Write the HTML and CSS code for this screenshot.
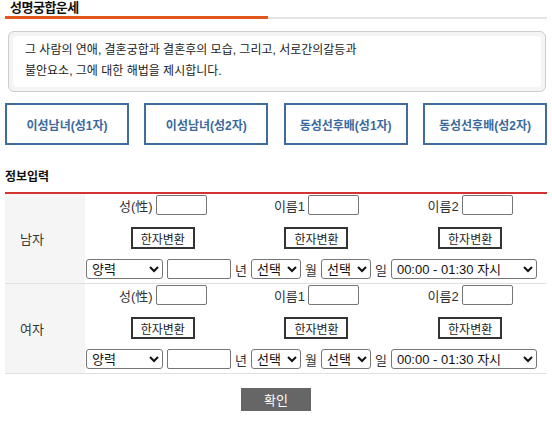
FILE: index.html
```html
<!DOCTYPE html>
<html lang="ko">
<head>
<meta charset="utf-8">
<title>성명궁합운세</title>
<link rel="stylesheet" href="styles.css">
</head>
<body>
<div class="page">
  <div class="title-bar"><h1 class="title">성명궁합운세</h1></div>

  <div class="intro">
    <div class="intro-inner">
      <p>그 사람의 연애, 결혼궁합과 결혼후의 모습, 그리고, 서로간의갈등과<br>불안요소, 그에 대한 해법을 제시합니다.</p>
    </div>
  </div>

  <div class="types">
    <button class="type-btn">이성남녀(성1자)</button>
    <button class="type-btn">이성남녀(성2자)</button>
    <button class="type-btn">동성선후배(성1자)</button>
    <button class="type-btn">동성선후배(성2자)</button>
  </div>

  <h2 class="section">정보입력</h2>

  <div class="form">
    <div class="person">
      <div class="person-label">남자</div>
      <div class="person-fields">
        <div class="grid-row">
          <div class="cell"><span class="lbl">성(性)</span><input class="txt" type="text"></div>
          <div class="cell"><span class="lbl">이름1</span><input class="txt" type="text"></div>
          <div class="cell"><span class="lbl">이름2</span><input class="txt" type="text"></div>
        </div>
        <div class="grid-row btn-row">
          <div class="cell"><button class="hanja">한자변환</button></div>
          <div class="cell"><button class="hanja">한자변환</button></div>
          <div class="cell"><button class="hanja">한자변환</button></div>
        </div>
        <div class="birth-row">
          <select class="sel sel-cal"><option>양력</option><option>음력</option></select>
          <input class="txt year" type="text">
          <span class="unit">년</span>
          <select class="sel sel-sm"><option>선택</option></select>
          <span class="unit">월</span>
          <select class="sel sel-sm"><option>선택</option></select>
          <span class="unit">일</span>
          <select class="sel sel-time"><option>00:00 - 01:30 자시</option></select>
        </div>
      </div>
    </div>

    <div class="person">
      <div class="person-label">여자</div>
      <div class="person-fields">
        <div class="grid-row">
          <div class="cell"><span class="lbl">성(性)</span><input class="txt" type="text"></div>
          <div class="cell"><span class="lbl">이름1</span><input class="txt" type="text"></div>
          <div class="cell"><span class="lbl">이름2</span><input class="txt" type="text"></div>
        </div>
        <div class="grid-row btn-row">
          <div class="cell"><button class="hanja">한자변환</button></div>
          <div class="cell"><button class="hanja">한자변환</button></div>
          <div class="cell"><button class="hanja">한자변환</button></div>
        </div>
        <div class="birth-row">
          <select class="sel sel-cal"><option>양력</option><option>음력</option></select>
          <input class="txt year" type="text">
          <span class="unit">년</span>
          <select class="sel sel-sm"><option>선택</option></select>
          <span class="unit">월</span>
          <select class="sel sel-sm"><option>선택</option></select>
          <span class="unit">일</span>
          <select class="sel sel-time"><option>00:00 - 01:30 자시</option></select>
        </div>
      </div>
    </div>
  </div>

  <div class="submit-wrap"><button class="submit">확인</button></div>
</div>
</body>
</html>
```

FILE: styles.css
```css
* { box-sizing: border-box; }

body {
  margin: 0;
  background: #fff;
  color: #222;
  font-family: "Liberation Sans", "Noto Sans CJK KR", sans-serif;
  font-size: 12px;
}

.page {
  width: 542px;
  margin: 0 5px;
}

.title-bar {
  border-bottom: 2px solid #e4e4e4;
}

.title {
  margin: 0 0 -2px;
  width: 263px;
  padding-left: 5px;
  font-size: 13px;
  line-height: 16px;
  font-weight: bold;
  letter-spacing: -0.5px;
  color: #111;
  border-bottom: 3px solid #e2561c;
}

.intro {
  margin: 12px 1px 0 3px;
  border: 1px solid #cdcdcd;
  border-radius: 6px;
  background: #f4f4f4;
  padding: 4px;
}

.intro-inner {
  background: #fff;
  border-radius: 4px;
  padding: 4px 12px 5px 12px;
}

.intro-inner p {
  margin: 0;
  font-size: 12px;
  line-height: 21px;
  color: #222;
}

.types {
  margin-top: 11px;
  display: flex;
  justify-content: space-between;
}

.type-btn {
  width: 124px;
  height: 42px;
  border: 2px solid #3f6c9c;
  background: #fff;
  color: #3a6a9c;
  font-family: inherit;
  font-size: 12px;
  font-weight: bold;
  padding: 0;
}

.section {
  margin: 24px 0 7px;
  font-size: 12px;
  line-height: 16px;
  font-weight: bold;
  color: #111;
}

.form {
  border-top: 2px solid #d43333;
}

.person {
  display: flex;
  border-bottom: 1px solid #e0e0e0;
}

.person-label {
  width: 80px;
  background: #f5f5f5;
  display: flex;
  align-items: center;
  padding-left: 15px;
  font-size: 13px;
  color: #333;
}

.person-fields {
  flex: 1;
  padding: 1px 0 4px 1px;
  display: flex;
  flex-direction: column;
}

.grid-row {
  display: grid;
  grid-template-columns: 1fr 1fr 1fr;
  height: 20px;
}

.btn-row {
  height: 22px;
  margin-top: 12px;
}

.cell {
  display: flex;
  align-items: center;
  justify-content: center;
  gap: 3px;
}

.lbl {
  font-size: 13px;
  color: #333;
}

.txt {
  width: 51px;
  height: 20px;
  border: 1px solid #767676;
  border-radius: 2px;
  background: #fff;
  padding: 0 2px;
  font-family: inherit;
  font-size: 13px;
}

.hanja {
  width: 64px;
  height: 22px;
  border: 2px solid #333;
  background: #fff;
  color: #222;
  font-family: inherit;
  font-size: 12px;
  padding: 0;
}

.birth-row {
  margin-top: 10px;
  height: 20px;
  display: flex;
  align-items: center;
  gap: 4px;
}

.sel {
  height: 20px;
  border: 1px solid #767676;
  border-radius: 3px;
  background: #fff;
  color: #111;
  font-family: inherit;
  font-size: 13px;
  padding: 0 0 0 1px;
}

.sel-cal { width: 77px; }
.sel-sm { width: 50px; }
.sel-time { width: 146px; }

.year { width: 64px; }

.unit {
  font-size: 13px;
  color: #333;
}

.submit-wrap {
  margin-top: 14px;
  display: flex;
  justify-content: center;
}

.submit {
  width: 70px;
  height: 23px;
  border: none;
  background: #666;
  color: #fff;
  font-family: inherit;
  font-size: 13px;
  padding: 0;
}
```
